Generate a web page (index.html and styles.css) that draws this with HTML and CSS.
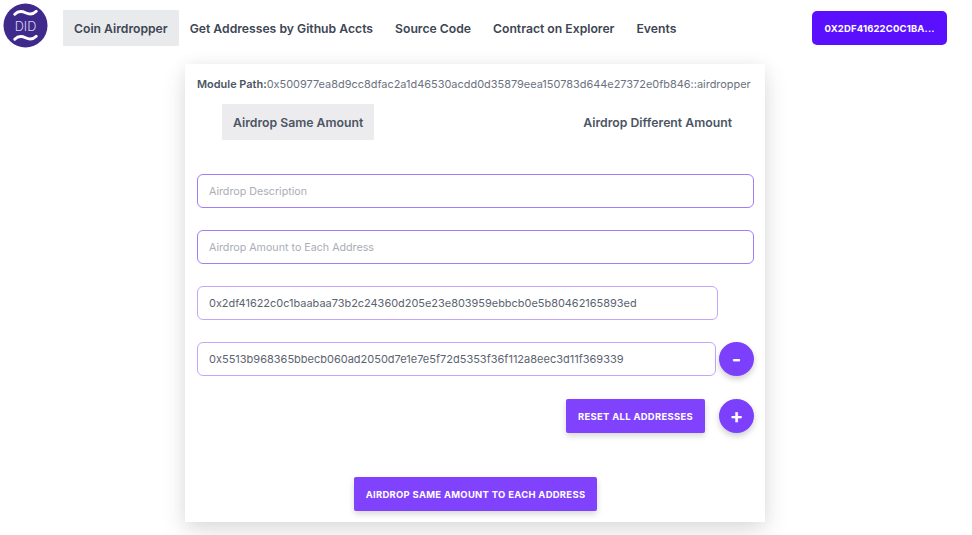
FILE: index.html
```html
<!DOCTYPE html>
<html lang="en">
<head>
<meta charset="utf-8">
<title>Coin Airdropper</title>
<link rel="stylesheet" href="styles.css">
</head>
<body>
<header class="nav">
  <svg class="logo" viewBox="0 0 46 46" aria-hidden="true">
    <circle cx="23" cy="23" r="22.5" fill="#3f2a8c"/>
    <path class="wave" d="M12 11.500c3.500-3.500 7-3.500 11-1.500s7.500 2 11-1.500"/>
    <path class="wave" d="M12 37c3.500-3.500 7-3.500 11-1.500s7.500 2 11-1.500"/>
    <text x="23" y="28.500" text-anchor="middle" class="logo-text">DID</text>
  </svg>
  <nav class="menu">
    <a class="menu-item active">Coin Airdropper</a>
    <a class="menu-item">Get Addresses by Github Accts</a>
    <a class="menu-item">Source Code</a>
    <a class="menu-item">Contract on Explorer</a>
    <a class="menu-item">Events</a>
  </nav>
  <button class="wallet">0X2DF41622C0C1BA...</button>
</header>
<main class="card">
  <p class="path"><strong>Module Path:</strong>0x500977ea8d9cc8dfac2a1d46530acdd0d35879eea150783d644e27372e0fb846::airdropper</p>
  <div class="tabs">
    <a class="tab active">Airdrop Same Amount</a>
    <a class="tab">Airdrop Different Amount</a>
  </div>
  <input class="field full" placeholder="Airdrop Description">
  <input class="field full" placeholder="Airdrop Amount to Each Address">
  <input class="field first-address" value="0x2df41622c0c1baabaa73b2c24360d205e23e803959ebbcb0e5b80462165893ed">
  <div class="row">
    <input class="field address" value="0x5513b968365bbecb060ad2050d7e1e7e5f72d5353f36f112a8eec3d11f369339">
    <button class="round minus">-</button>
  </div>
  <div class="row actions">
    <button class="btn">Reset all addresses</button>
    <button class="round plus">+</button>
  </div>
  <div class="submit">
    <button class="btn">Airdrop same amount to each address</button>
  </div>
</main>
</body>
</html>
```
FILE: styles.css
```css
* { box-sizing: border-box; }
html, body { margin: 0; height: 535px; overflow: hidden; }
body { background: #fff; font-family: Inter, "Liberation Sans", sans-serif; color: #4b5563; }
.nav { display: flex; align-items: center; height: 56px; padding: 0 25px 0 3px; }
.logo { width: 45px; height: 45px; flex: none; margin-bottom: 5px; }
.wave { fill: none; stroke: #fff; stroke-width: 3; stroke-linecap: round; }
.logo-text { font: 300 13px Inter, "Liberation Sans", sans-serif; fill: #d8d4ee; }
.menu { display: flex; margin-left: 15px; flex: 1; }
.menu-item { padding: 0 11px; height: 36px; line-height: 37px; font-size: 12.2px; font-weight: 600; color: #3d4654; white-space: nowrap; }
.menu-item.active { background: #e9eaec; }
.wallet { width: 135px; height: 34px; border: 0; border-radius: 5px; background: #5a0fff; color: #fff; font: 700 9.500px Inter, "Liberation Sans", sans-serif; letter-spacing: .15px; padding: 0; }
.card { width: 580px; height: 458px; margin: 8px 0 0 185px; padding: 12px 12px 0; background: #fff; box-shadow: 0 10px 24px rgba(0,0,0,.12), 0 0 14px rgba(0,0,0,.05); }
.path { margin: 0; font-size: 10.95px; line-height: 16px; color: #6b7280; white-space: nowrap; }
.path strong { font-weight: 600; color: #4b5563; }
.tabs { display: flex; justify-content: space-between; margin: 12px 10px 34px 25px; }
.tab { height: 36px; line-height: 37px; padding: 0 11px; font-size: 12.25px; font-weight: 600; color: #4b5563; white-space: nowrap; }
.tab.active { background: #ececee; }
.field { display: block; height: 34px; padding: 0 11px; background: #fff; border: 1px solid #a57cf5; border-radius: 6px; font: 400 10.95px Inter, "Liberation Sans", sans-serif; color: #5b6370; outline: 0; }
.field::placeholder { color: #a9adb6; opacity: 1; font-size: 10.7px; }
.full { width: 557px; margin-bottom: 22px; }
.first-address { width: 521px; margin-bottom: 22px; border-color: #c4a5fb; }
.row { display: flex; align-items: center; justify-content: flex-end; width: 557px; }
.address { width: 519px; border-color: #c4a5fb; margin-right: 3px; font-size: 11px; }
.round { width: 35px; height: 34px; border: 0; border-radius: 50%; background: #7c3ffb; color: #fff; font: 700 20px Inter, "Liberation Sans", sans-serif; padding: 0; box-shadow: 0 3px 6px rgba(0,0,0,.2); flex: none; }
.actions { margin-top: 23px; }
.btn { height: 34px; padding: 0 12px; border: 0; border-radius: 2px; background: #8042fd; color: #fff; font: 700 9.450px Inter, "Liberation Sans", sans-serif; letter-spacing: .3px; text-transform: uppercase; box-shadow: 0 3px 6px rgba(0,0,0,.16); white-space: nowrap; }
.actions .btn { margin-right: 14px; }
.submit { display: flex; justify-content: center; margin-top: 44px; width: 557px; }
```
